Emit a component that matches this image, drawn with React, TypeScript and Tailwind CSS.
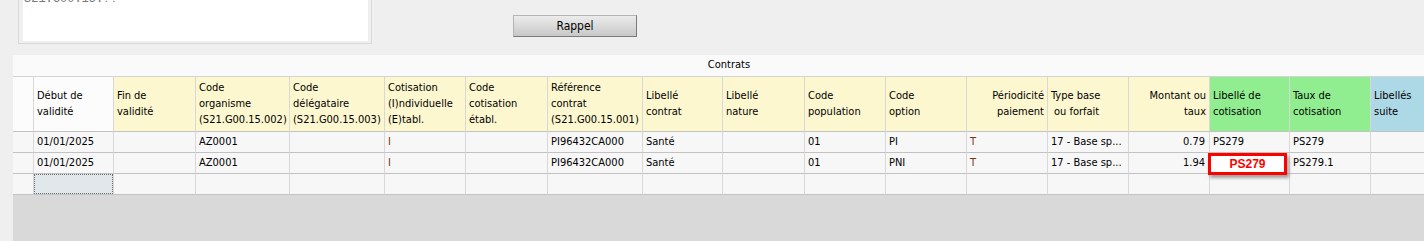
import React from "react";

const COLS =
  "grid grid-cols-[21px_80px_82px_94px_95px_81px_82px_95px_80px_82px_81px_81px_81px_81px_81px_80px_81px_1fr]";

type Head = { lines: React.ReactNode[]; bg: string; right?: boolean };

const HEADERS: Head[] = [
  { lines: [], bg: "bg-[#fcfcfc]" },
  { lines: ["Début de", "validité"], bg: "bg-[#fcfcfc]" },
  { lines: ["Fin de", "validité"], bg: "bg-[#fdf7d0]" },
  { lines: ["Code", "organisme", "(S21.G00.15.002)"], bg: "bg-[#fdf7d0]" },
  { lines: ["Code", "délégataire", "(S21.G00.15.003)"], bg: "bg-[#fdf7d0]" },
  { lines: ["Cotisation", "(I)ndividuelle", "(E)tabl."], bg: "bg-[#fdf7d0]" },
  { lines: ["Code", "cotisation", "établ."], bg: "bg-[#fdf7d0]" },
  { lines: ["Référence", "contrat", "(S21.G00.15.001)"], bg: "bg-[#fdf7d0]" },
  { lines: ["Libellé", "contrat"], bg: "bg-[#fdf7d0]" },
  { lines: ["Libellé", "nature"], bg: "bg-[#fdf7d0]" },
  { lines: ["Code", "population"], bg: "bg-[#fdf7d0]" },
  { lines: ["Code", "option"], bg: "bg-[#fdf7d0]" },
  { lines: ["Périodicité", "paiement"], bg: "bg-[#fdf7d0]", right: true },
  {
    lines: ["Type base", <span className="pl-[3px]">ou forfait</span>],
    bg: "bg-[#fdf7d0]",
  },
  { lines: ["Montant ou", "taux"], bg: "bg-[#fdf7d0]", right: true },
  { lines: ["Libellé de", "cotisation"], bg: "bg-[#90ee90]" },
  { lines: ["Taux de", "cotisation"], bg: "bg-[#90ee90]" },
  { lines: ["Libellés", "suite"], bg: "bg-[#add8e6]" },
];

const ROWS: string[][] = [
  ["", "01/01/2025", "", "AZ0001", "", "I", "", "PI96432CA000", "Santé", "", "01", "PI", "T", "17 - Base sp...", "0.79", "PS279", "PS279", ""],
  ["", "01/01/2025", "", "AZ0001", "", "I", "", "PI96432CA000", "Santé", "", "01", "PNI", "T", "17 - Base sp...", "1.94", "", "PS279.1", ""],
  ["", "", "", "", "", "", "", "", "", "", "", "", "", "", "", "", "", ""],
];

const cellLines = "border-r border-b border-r-[#d8d8d8] border-b-[#c2c2c2]";

export default function App() {
  return (
    <div className="w-[1424px] h-[241px] overflow-hidden bg-[#efefef] font-['Tahoma','DejaVu_Sans_Condensed','Liberation_Sans',sans-serif] text-[11px] text-black">
      {/* top area */}
      <div className="flex h-[55px]">
        <div className="ml-[18px] -mt-[20px] h-[64px] w-[354px] border border-[#d9d9d9] pl-[4px] pr-[3px] pb-[2px]">
          <div className="h-full bg-white px-[1px] font-['Liberation_Mono',monospace] text-[12px] leading-[14px] text-[#777]">
            <div className="pt-[11px]">S21.G00.15.??</div>
          </div>
        </div>
        <button
          type="button"
          className="ml-[141px] mt-[15px] h-[22px] w-[124px] border border-[#b5b5b5] border-r-[#7a7a7a] border-b-[#7a7a7a] bg-gradient-to-b from-[#ececec] to-[#c8c8c8] text-[12px] leading-[20px] text-black"
        >
          Rappel
        </button>
      </div>

      {/* grid */}
      <div className="ml-[13px] w-[1432px] h-[186px] bg-[#d9d9d9] flex flex-col">
        <div className="h-[22px] bg-[#fafafa] border-b border-[#d4d4d4] text-center leading-[20px]">
          Contrats
        </div>
        <div className={COLS}>
          {HEADERS.map((h, i) => (
            <div
              key={i}
              className={`h-[55px] px-[3px] flex flex-col justify-center leading-[16px] whitespace-nowrap overflow-hidden ${h.bg} ${cellLines} ${
                h.right ? "items-end text-right" : "items-start"
              }`}
            >
              {h.lines.map((l, j) => (
                <div key={j}>{l}</div>
              ))}
            </div>
          ))}
          {ROWS.map((r, ri) =>
            r.map((v, ci) => {
              const right = ci === 14;
              const brown = ci === 5 || ci === 12;
              const focus = ri === 2 && ci === 1;
              const editor = ri === 1 && ci === 15;
              return (
                <div
                  key={`${ri}-${ci}`}
                  className={`relative h-[21px] flex items-center whitespace-nowrap ${cellLines} ${
                    focus ? "bg-[#e1e8eb]" : "bg-[#f7f7f7]"
                  } ${right ? "justify-end pr-[4px]" : "pl-[3px]"} ${
                    brown ? "text-[#7a3510]" : ""
                  }`}
                >
                  {focus ? (
                    <div className="absolute inset-0 border border-dotted border-[#6b6b6b]" />
                  ) : null}
                  {v}
                  {editor ? (
                    <div className="absolute -left-[2px] top-0 z-10 w-[79px] h-[22px] border-[3px] border-[#ff0000] bg-white shadow-[2px_3px_3px_rgba(0,0,0,0.35)] flex items-center justify-center font-['Liberation_Sans',sans-serif] font-bold text-[12px] text-[#ff0000]">
                      PS279
                    </div>
                  ) : null}
                </div>
              );
            })
          )}
        </div>
        <div className="flex-1 bg-[#d9d9d9]" />
      </div>
    </div>
  );
}
